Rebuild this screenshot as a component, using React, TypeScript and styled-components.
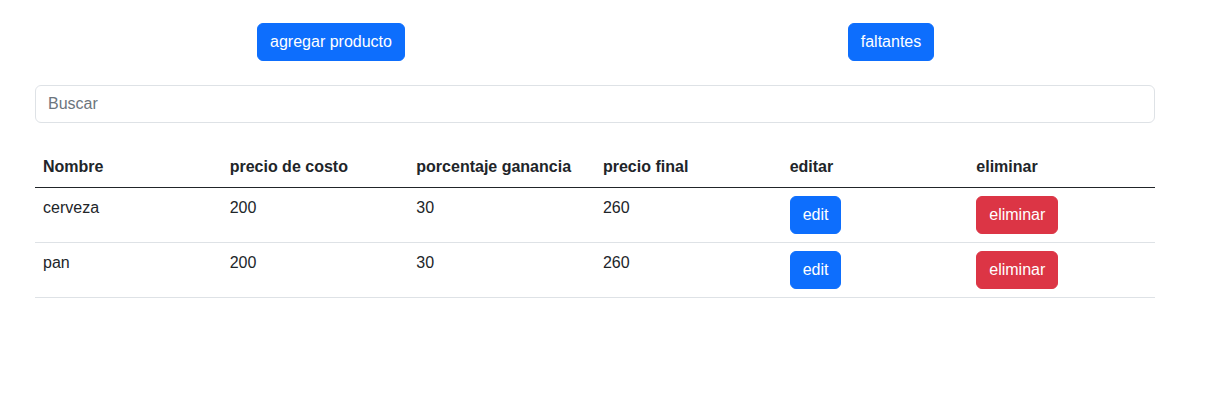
import React from "react";
import styled, { createGlobalStyle } from "styled-components";

const Global = createGlobalStyle`
  * { box-sizing: border-box; }
  body {
    margin: 0;
    background: #fff;
    color: #212529;
    font-family: "Segoe UI", "Liberation Sans", Arial, sans-serif;
    font-size: 16px;
    line-height: 1.5;
  }
`;

const Page = styled.div`
  width: 1120px;
  margin-left: 35px;
  padding-top: 23px;
`;

const ActionRow = styled.div`
  display: grid;
  grid-template-columns: 560px 560px;
  margin-left: 16px;
`;

const ActionCol = styled.div`
  display: flex;
  justify-content: center;
`;

const Button = styled.button<{ $variant?: "primary" | "danger" }>`
  font-family: inherit;
  font-size: 16px;
  line-height: 24px;
  padding: 6px 12px;
  border: 1px solid ${(p) => (p.$variant === "danger" ? "#dc3545" : "#0d6efd")};
  background: ${(p) => (p.$variant === "danger" ? "#dc3545" : "#0d6efd")};
  color: #fff;
  border-radius: 6px;
  cursor: pointer;
`;

const Search = styled.input`
  display: block;
  width: 100%;
  height: 38px;
  margin-top: 24px;
  padding: 6px 12px;
  font-family: inherit;
  font-size: 16px;
  line-height: 24px;
  color: #212529;
  border: 1px solid #dee2e6;
  border-radius: 6px;
  outline: none;
  &::placeholder { color: #6c757d; }
`;

const Table = styled.table`
  width: 100%;
  margin-top: 24px;
  border-collapse: collapse;
  table-layout: fixed;
`;

const Th = styled.th`
  text-align: left;
  font-weight: 700;
  padding: 8px;
  border-bottom: 1px solid #212529;
`;

const Td = styled.td`
  vertical-align: top;
  padding: 8px;
  border-bottom: 1px solid #dee2e6;
`;

const rows = [
  { nombre: "cerveza", costo: 200, pct: 30, final: 260 },
  { nombre: "pan", costo: 200, pct: 30, final: 260 },
];

export default function App() {
  return (
    <>
      <Global />
      <Page>
        <ActionRow>
          <ActionCol>
            <Button>agregar producto</Button>
          </ActionCol>
          <ActionCol>
            <Button>faltantes</Button>
          </ActionCol>
        </ActionRow>
        <Search placeholder="Buscar" />
        <Table>
          <thead>
            <tr>
              <Th>Nombre</Th>
              <Th>precio de costo</Th>
              <Th>porcentaje ganancia</Th>
              <Th>precio final</Th>
              <Th>editar</Th>
              <Th>eliminar</Th>
            </tr>
          </thead>
          <tbody>
            {rows.map((r) => (
              <tr key={r.nombre}>
                <Td>{r.nombre}</Td>
                <Td>{r.costo}</Td>
                <Td>{r.pct}</Td>
                <Td>{r.final}</Td>
                <Td>
                  <Button>edit</Button>
                </Td>
                <Td>
                  <Button $variant="danger">eliminar</Button>
                </Td>
              </tr>
            ))}
          </tbody>
        </Table>
      </Page>
    </>
  );
}
